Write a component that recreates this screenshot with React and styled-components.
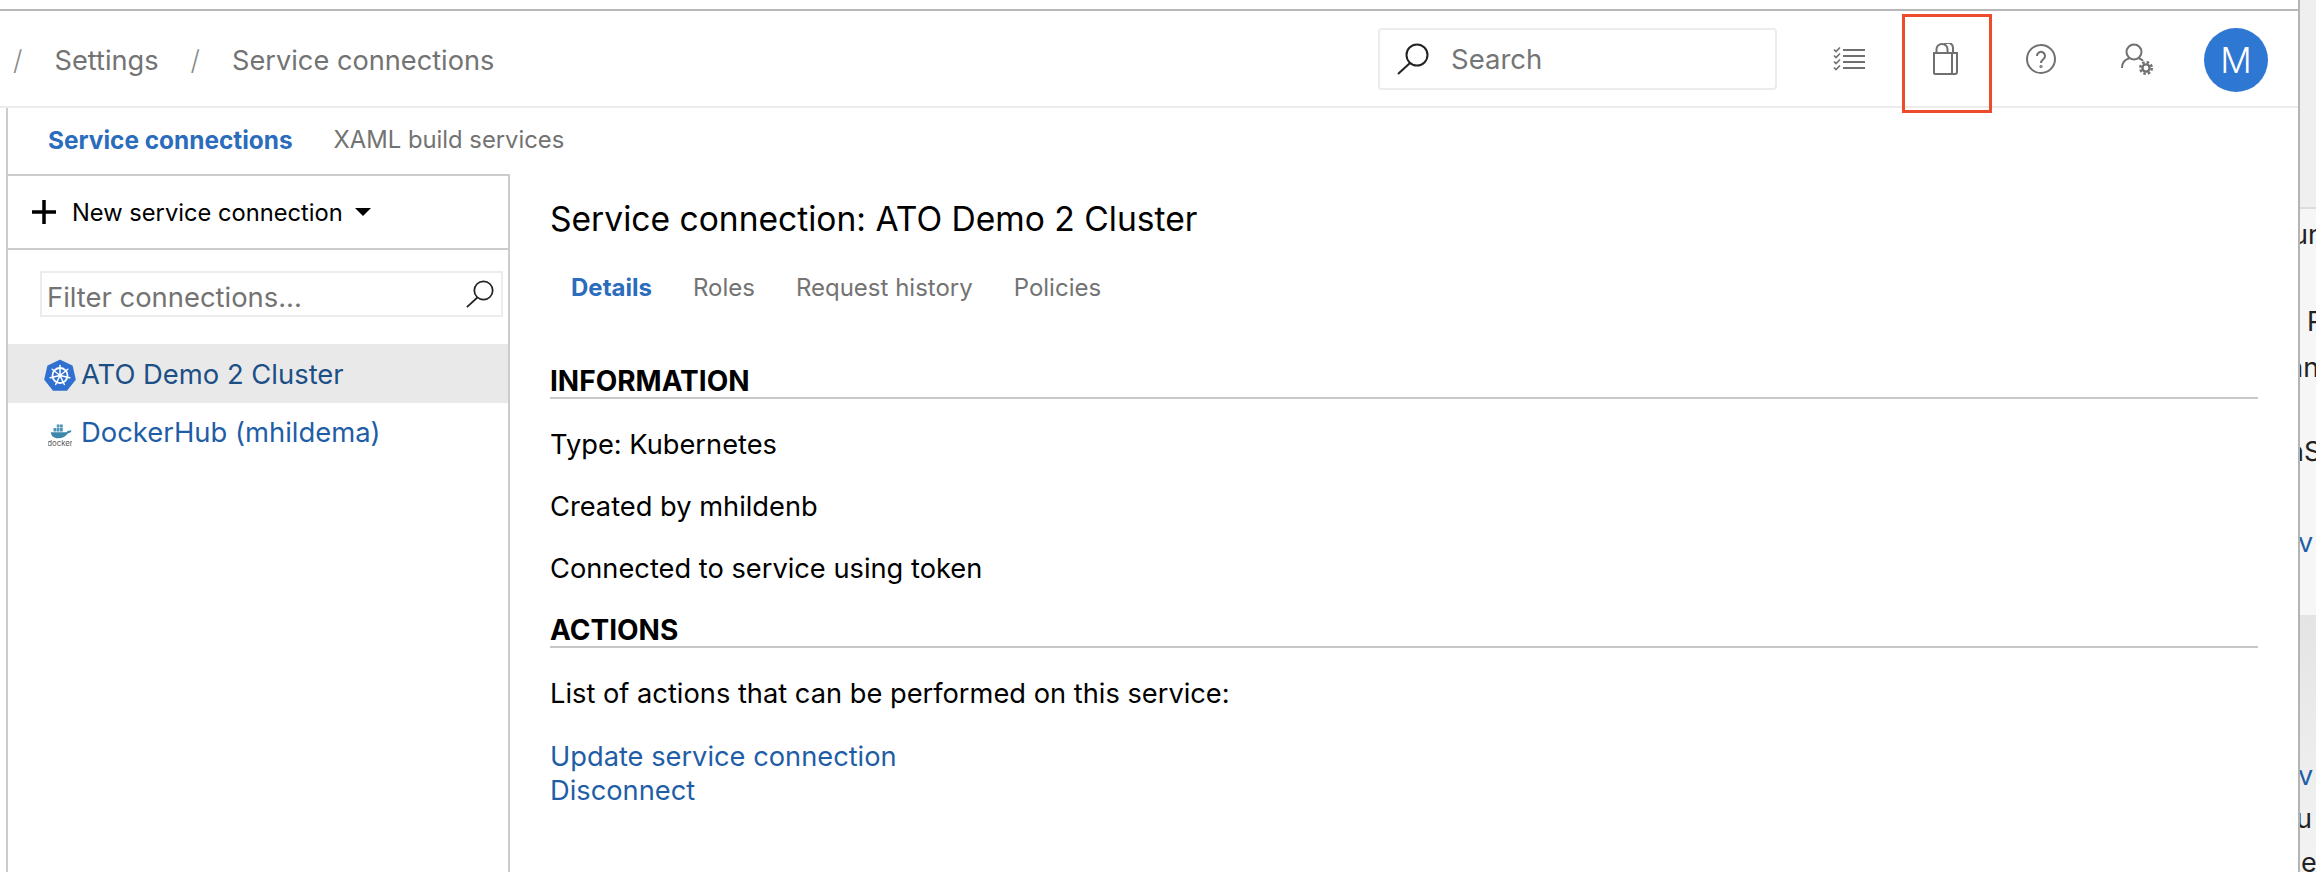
import styled, { createGlobalStyle } from "styled-components";

const Global = createGlobalStyle`
  html, body { margin: 0; padding: 0; background: #fff; }
  body { font-family: Inter, "Noto Sans", "Liberation Sans", sans-serif; color: #000; overflow: hidden; }
  * { box-sizing: border-box; }
`;

const Page = styled.div`
  display: flex;
  width: 2316px;
  height: 872px;
  overflow: hidden;
`;

const Window = styled.div`
  width: 2298px;
  display: flex;
  flex-direction: column;
  padding-top: 9px;
`;

const Header = styled.header`
  display: flex;
  align-items: center;
  height: 99px;
  flex: none;
  padding-right: 11px;
  border-top: 2px solid #b8b8b8;
  border-bottom: 2px solid #ececec;
`;

const Crumbs = styled.nav`
  display: flex;
  align-items: center;
  gap: 32px;
  padding: 3px 0 0 13px;
  font-size: 27.2px;
  color: #737373;
`;

const Slash = styled.span`
  color: #8c8c8c;
  font-weight: 300;
`;

const SearchBox = styled.div`
  margin-left: auto;
  margin-right: 24px;
  width: 399px;
  height: 62px;
  display: flex;
  align-items: center;
  gap: 22px;
  padding-left: 17px;
  border: 2px solid #ececec;
  border-radius: 4px;
  font-size: 27.5px;
  color: #757575;
`;

const IconSlot = styled.div`
  position: relative;
  width: ${p => (p.$avatar ? "102px" : "96px")};
  height: 60px;
  display: flex;
  align-items: center;
  justify-content: center;
  color: #707070;
`;

const Highlight = styled.div`
  position: absolute;
  left: 5px;
  top: -15px;
  width: 90px;
  height: 99px;
  border: 3px solid #ee4a2c;
`;

const Avatar = styled.div`
  width: 64px;
  height: 64px;
  margin-top: 3px;
  border-radius: 50%;
  background: #2e77d2;
  color: #fff;
  display: flex;
  align-items: center;
  justify-content: center;
  font-size: 35px;
  font-weight: 300;
`;

const Content = styled.div`
  flex: 1;
  margin-left: 6px;
  border-left: 2px solid #cccccc;
  display: flex;
  flex-direction: column;
  min-height: 0;
`;

const SubTabs = styled.div`
  height: 66px;
  flex: none;
  display: flex;
  align-items: center;
  gap: 41px;
  padding: 0 0 3px 40px;
  font-size: 23.8px;

  span:first-child {
    font-size: 24.4px;
  }
`;

const Tab = styled.span`
  color: ${p => (p.$active ? "#2b6cbc" : "#737373")};
  font-weight: ${p => (p.$active ? 700 : 400)};
`;

const Body = styled.div`
  flex: 1;
  display: flex;
  min-height: 0;
`;

const Sidebar = styled.aside`
  width: 502px;
  flex: none;
  border-top: 2px solid #cccccc;
  border-right: 2px solid #cccccc;
`;

const Toolbar = styled.div`
  height: 74px;
  display: flex;
  align-items: center;
  gap: 16px;
  padding-left: 24px;
  border-bottom: 2px solid #cccccc;
  font-size: 23.7px;
`;

const Caret = styled.span`
  width: 0;
  height: 0;
  margin-left: -4px;
  border-left: 8px solid transparent;
  border-right: 8px solid transparent;
  border-top: 8px solid #000;
`;

const Filter = styled.div`
  width: 463px;
  height: 46px;
  margin: 21px 0 27px 32px;
  display: flex;
  align-items: center;
  justify-content: space-between;
  padding: 5px 7px 0 5px;
  border: 2px solid #ececec;
  font-size: 27.4px;
  color: #737373;

  svg {
    margin-top: -5px;
  }
`;

const Connection = styled.div`
  height: ${p => (p.$selected ? "59px" : "57px")};
  display: flex;
  align-items: center;
  padding-left: 32px;
  background: ${p => (p.$selected ? "#e9e9e9" : "transparent")};
  color: ${p => (p.$selected ? "#1c4f86" : "#1f5ea6")};
  font-size: 27.4px;
`;

const ConnIcon = styled.span`
  width: 41px;
  flex: none;
  display: flex;
  justify-content: center;
  padding-right: 1px;
  margin-top: ${p => p.$top || "0"};
`;

const Main = styled.main`
  flex: 1;
  padding: 0 40px;
`;

const Title = styled.h1`
  margin: 20px 0 0;
  font-size: 33.6px;
  font-weight: 400;
  line-height: 50px;
`;

const DetailTabs = styled.div`
  display: flex;
  gap: 41px;
  margin-top: 29px;
  padding-left: 21px;
  font-size: 24px;
  line-height: 30px;
`;

const Heading = styled.h2`
  margin: ${p => p.$top} 0 0;
  font-size: 28px;
  font-weight: 700;
  line-height: 32px;
  border-bottom: 2px solid #c8c8c8;
`;

const Para = styled.p`
  margin: 30px 0 0;
  font-size: 27.25px;
  line-height: 32px;
`;

const Links = styled.div`
  margin-top: 30px;
  display: flex;
  flex-direction: column;
  font-size: 27.25px;
  line-height: 34px;
  color: #1f5ea6;
`;

const Strip = styled.div`
  width: 18px;
  flex: none;
  display: flex;
  flex-direction: column;
  overflow: hidden;
  border-left: 2px solid #b4b4b4;
  font-size: 27px;
  line-height: 32px;
  color: #222;
  white-space: nowrap;
`;

const StripTop = styled.div`
  height: 209px;
  flex: none;
  background: #efefef;
  border-bottom: 2px solid #dcdcdc;
`;

const StripMiddle = styled.div`
  height: 406px;
  flex: none;
  background: #f6f6f6;
`;

const StripBottom = styled.div`
  flex: 1;
  background: linear-gradient(#e4e4e4, #f4f4f4);
`;

const Clip = styled.div`
  margin-top: ${p => p.$top}px;
  margin-left: ${p => p.$left}px;
  color: ${p => p.$color || "inherit"};
`;

function SearchIcon({ size = 32 }) {
  return (
    <svg width={size} height={size} viewBox="0 0 32 32" fill="none" stroke="#222" strokeWidth="2">
      <circle cx="20" cy="12" r="10.5" />
      <path d="M13 20 1 31" />
    </svg>
  );
}

function ChecklistIcon() {
  return (
    <svg width="32" height="24" viewBox="0 0 32 24" fill="none" stroke="currentColor" strokeWidth="2">
      <path d="M10 3h22M10 9h22M10 15h22M10 21h22" />
      <path strokeWidth="1.6" d="M1 2.5 3 4.5 7 0.5M1 8.5 3 10.5 7 6.5M1 14.5 3 16.5 7 12.5M1 20.5 3 22.5 7 18.5" />
    </svg>
  );
}

function BagIcon() {
  return (
    <svg width="26" height="32" viewBox="0 0 26 32" fill="none" stroke="currentColor" strokeWidth="2">
      <path d="M2 10h18v21H3a1 1 0 0 1-1-1z" />
      <path d="M20 10h5v19a2 2 0 0 1-2 2h-3" />
      <path d="M4.500 10V6a5.500 5 0 0 1 11 0v4" />
      <path d="M12 1.800a5 5 0 0 1 9 3.200v5" />
    </svg>
  );
}

function HelpIcon() {
  return (
    <svg width="30" height="30" viewBox="0 0 30 30" fill="none" stroke="currentColor" strokeWidth="2">
      <circle cx="15" cy="15" r="14" />
      <path d="M11 12a4 4 0 1 1 6.500 3c-1.500 1.200-2.500 2-2.500 4" />
      <circle cx="15" cy="22.500" r="0.600" />
    </svg>
  );
}

function UserGearIcon() {
  return (
    <svg width="32" height="32" viewBox="0 0 32 32" fill="none" stroke="currentColor" strokeWidth="2">
      <circle cx="13" cy="9" r="7.500" />
      <path d="M1 25c0-5 3-8.500 7-9.500M18 15.500c1.500.4 3 1.200 4 2.300" />
      <circle cx="25" cy="25" r="3.600" strokeWidth="2.400" />
      <circle cx="25" cy="25" r="5.800" strokeWidth="2.400" strokeDasharray="2.500 2.050" />
    </svg>
  );
}

function PlusIcon() {
  return (
    <svg width="24" height="24" viewBox="0 0 24 24" stroke="#000" strokeWidth="3.500">
      <path d="M12 0v24M0 12h24" />
    </svg>
  );
}

function KubernetesIcon() {
  const spokes = [0, 51.4, 102.8, 154.3, 205.7, 257.1, 308.6];
  return (
    <svg width="32" height="32" viewBox="0 0 32 32">
      <path d="M16 1.500 28 7.300 31 20.500 22.600 31H9.400L1 20.500 4 7.300z" fill="#2f70d0" stroke="#2f70d0" strokeWidth="1.500" strokeLinejoin="round" />
      <g fill="none" stroke="#fff">
        <circle cx="16" cy="16.500" r="7.500" strokeWidth="1.800" />
        <circle cx="16" cy="16.500" r="1.600" fill="#fff" strokeWidth="0.500" />
        {spokes.map(a => (
          <path key={a} d="M16 16.500V6.500" strokeWidth="1.500" strokeLinecap="round" transform={`rotate(${a} 16 16.500)`} />
        ))}
      </g>
    </svg>
  );
}

function DockerIcon() {
  return (
    <svg width="24" height="24" viewBox="0 0 26 25">
      <path d="M3 9.500h17c.8-1.500 2.200-2 3.200-1.500.6-.6 1.400-.6 2.300-.2-.5 1.500-2 2.500-3.500 2.500C19 14 16 16 11 16 6 16 3.500 13.500 3 9.500z" fill="#3d87ab" />
      <path d="M6 5h3v3.800H6zM9.500 5h3v3.800h-3zM13 5h3v3.800h-3zM9.500 1h3v3.500h-3zM13 1h3v3.500h-3z" fill="#4c94b8" />
      <text x="13" y="24" textAnchor="middle" fontSize="8.500" fontFamily="Inter, sans-serif" fill="#5a5a5a">docker</text>
    </svg>
  );
}

export default function App() {
  return (
    <Page>
      <Global />
      <Window>
        <Header>
          <Crumbs>
            <Slash>/</Slash>
            <span>Settings</span>
            <Slash>/</Slash>
            <span>Service connections</span>
          </Crumbs>
          <SearchBox>
            <SearchIcon />
            <span>Search</span>
          </SearchBox>
          <IconSlot><ChecklistIcon /></IconSlot>
          <IconSlot>
            <BagIcon />
            <Highlight />
          </IconSlot>
          <IconSlot><HelpIcon /></IconSlot>
          <IconSlot><UserGearIcon /></IconSlot>
          <IconSlot $avatar><Avatar>M</Avatar></IconSlot>
        </Header>
        <Content>
          <SubTabs>
            <Tab $active>Service connections</Tab>
            <Tab>XAML build services</Tab>
          </SubTabs>
          <Body>
            <Sidebar>
              <Toolbar>
                <PlusIcon />
                <span>New service connection</span>
                <Caret />
              </Toolbar>
              <Filter>
                <span>Filter connections...</span>
                <SearchIcon size={28} />
              </Filter>
              <Connection $selected>
                <ConnIcon $top="2px"><KubernetesIcon /></ConnIcon>
                ATO Demo 2 Cluster
              </Connection>
              <Connection>
                <ConnIcon $top="6px"><DockerIcon /></ConnIcon>
                DockerHub (mhildema)
              </Connection>
            </Sidebar>
            <Main>
              <Title>Service connection: ATO Demo 2 Cluster</Title>
              <DetailTabs>
                <Tab $active>Details</Tab>
                <Tab>Roles</Tab>
                <Tab>Request history</Tab>
                <Tab>Policies</Tab>
              </DetailTabs>
              <Heading $top="62px">INFORMATION</Heading>
              <Para>Type: Kubernetes</Para>
              <Para>Created by mhildenb</Para>
              <Para>Connected to service using token</Para>
              <Heading $top="29px">ACTIONS</Heading>
              <Para>List of actions that can be performed on this service:</Para>
              <Links>
                <span>Update service connection</span>
                <span>Disconnect</span>
              </Links>
            </Main>
          </Body>
        </Content>
      </Window>
      <Strip>
        <StripTop />
        <StripMiddle>
          <Clip $top={10} $left={-8}>un</Clip>
          <Clip $top={55} $left={7}>R</Clip>
          <Clip $top={14} $left={-12}>an</Clip>
          <Clip $top={52} $left={-12}>nS</Clip>
          <Clip $top={59} $left={-2} $color="#1f5ea6">v</Clip>
        </StripMiddle>
        <StripBottom>
          <Clip $top={145} $left={-2} $color="#1f5ea6">v</Clip>
          <Clip $top={11} $left={-4}>u</Clip>
          <Clip $top={12} $left={-15}>ne</Clip>
        </StripBottom>
      </Strip>
    </Page>
  );
}
